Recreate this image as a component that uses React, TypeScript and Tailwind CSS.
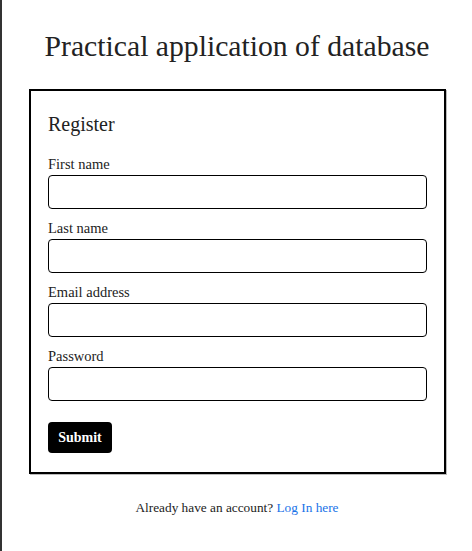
const fields = [
	{ id: "first", label: "First name", type: "text" },
	{ id: "last", label: "Last name", type: "text" },
	{ id: "email", label: "Email address", type: "email" },
	{ id: "password", label: "Password", type: "password" },
]

export default function App() {
	return (
		<div className="min-h-screen border-l-2 border-[#333] bg-white font-['Liberation_Serif',serif] text-[#222]">
			<h1 className="pt-[28px] text-center text-[29.7px] leading-[36px]">
				Practical application of database
			</h1>

			<div className="ml-[27px] mt-[25px] w-[417px] border-2 border-black px-[17px] pb-[19px] pt-[21px] shadow-[1px_1px_0_#bbb]">
				<h2 className="text-[20px] leading-[24px]">Register</h2>

				<form className="mt-[18px]" onSubmit={(e) => e.preventDefault()}>
					{fields.map((f) => (
						<div key={f.id} className="mb-[9px]">
							<label htmlFor={f.id} className="block text-[14.5px] leading-[21px]">
								{f.label}
							</label>
							<input
								id={f.id}
								type={f.type}
								className="block h-[34px] w-full rounded-[4px] border-[1.5px] border-black px-2"
							/>
						</div>
					))}
					<button
						type="submit"
						className="mt-[12px] h-[31px] w-[64px] rounded-[4px] bg-black text-[14px] font-bold text-white"
					>
						Submit
					</button>
				</form>
			</div>

			<p className="mt-[24px] text-center text-[13.3px]">
				Already have an account?{" "}
				<a href="#" className="text-[#1a73e8]">
					Log In here
				</a>
			</p>
		</div>
	)
}
